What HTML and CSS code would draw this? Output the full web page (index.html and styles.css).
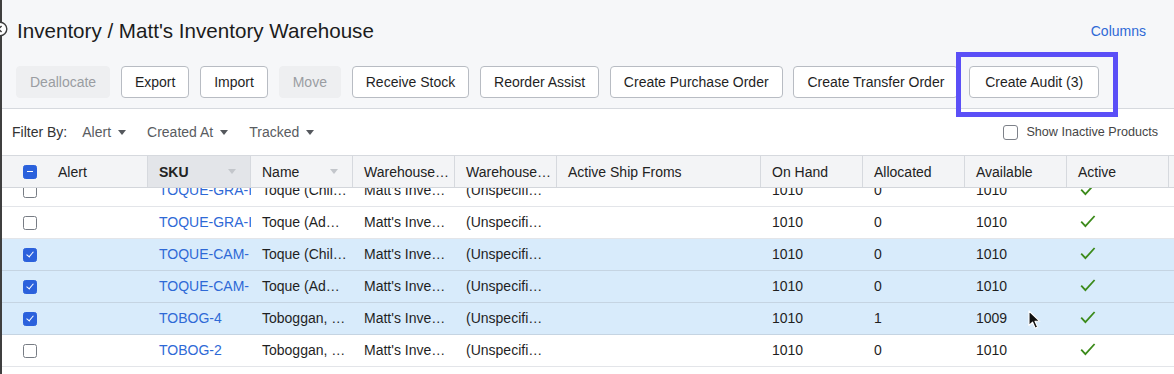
FILE: index.html
```html
<!DOCTYPE html>
<html lang="en">
<head>
    <meta charset="UTF-8">
    <title>Inventory - Matt's Inventory Warehouse</title>
    <link rel="stylesheet" href="styles.css">
</head>
<body>
<div class="page">
    <span class="collapse-handle">
        <svg width="16" height="16" viewBox="0 0 16 16"><circle cx="8" cy="8" r="6.8" fill="#fff" stroke="#3d3d3d" stroke-width="1.4"/><path d="M9.6 5 L6.6 8 L9.6 11" fill="none" stroke="#3d3d3d" stroke-width="1.4"/></svg>
    </span>

    <div class="top">
        <div class="title-row">
            <h1>Inventory / Matt's Inventory Warehouse</h1>
            <a class="columns-link" href="#">Columns</a>
        </div>
        <div class="actions">
            <button class="btn" disabled>Deallocate</button>
            <button class="btn">Export</button>
            <button class="btn">Import</button>
            <button class="btn" disabled>Move</button>
            <button class="btn">Receive Stock</button>
            <button class="btn">Reorder Assist</button>
            <button class="btn">Create Purchase Order</button>
            <button class="btn">Create Transfer Order</button>
            <span class="focus-wrap">
                <button class="btn wide">Create Audit (3)</button>
                <span class="focus-ring"></span>
            </span>
        </div>
    </div>

    <div class="filters">
        <span class="filter-label">Filter By:</span>
        <span class="filter">Alert <i class="caret"></i></span>
        <span class="filter">Created At <i class="caret"></i></span>
        <span class="filter">Tracked <i class="caret"></i></span>
        <label class="inactive"><span class="box"></span>Show Inactive Products</label>
    </div>

    <div class="grid">
        <div class="grid-head">
            <div class="cell first"><span class="check partial"></span><span>Alert</span></div>
            <div class="cell sorted"><b>SKU</b><i class="sort"></i></div>
            <div class="cell"><span>Name</span><i class="sort"></i></div>
            <div class="cell"><span>Warehouse…</span></div>
            <div class="cell"><span>Warehouse…</span></div>
            <div class="cell"><span>Active Ship Froms</span></div>
            <div class="cell"><span>On Hand</span></div>
            <div class="cell"><span>Allocated</span></div>
            <div class="cell"><span>Available</span></div>
            <div class="cell"><span>Active</span></div>
            <div class="cell end"></div>
        </div>
        <div class="grid-body">
            <div class="rows">
                <div class="row">
                    <div class="cell first"><span class="check"></span></div>
                    <div class="cell sku">TOQUE-GRA-I</div>
                    <div class="cell">Toque (Chil…</div>
                    <div class="cell">Matt's Inve…</div>
                    <div class="cell">(Unspecifi…</div>
                    <div class="cell"></div>
                    <div class="cell">1010</div>
                    <div class="cell">0</div>
                    <div class="cell">1010</div>
                    <div class="cell"><svg class="tick" width="16" height="13" viewBox="0 0 16 13"><path d="M1.2 6.6 L5.4 11.2 L14.6 1" fill="none" stroke="#3b8a1a" stroke-width="1.8"/></svg></div>
                    <div class="cell end"></div>
                </div>
                <div class="row">
                    <div class="cell first"><span class="check"></span></div>
                    <div class="cell sku">TOQUE-GRA-I</div>
                    <div class="cell">Toque (Ad…</div>
                    <div class="cell">Matt's Inve…</div>
                    <div class="cell">(Unspecifi…</div>
                    <div class="cell"></div>
                    <div class="cell">1010</div>
                    <div class="cell">0</div>
                    <div class="cell">1010</div>
                    <div class="cell"><svg class="tick" width="16" height="13" viewBox="0 0 16 13"><path d="M1.2 6.6 L5.4 11.2 L14.6 1" fill="none" stroke="#3b8a1a" stroke-width="1.8"/></svg></div>
                    <div class="cell end"></div>
                </div>
                <div class="row selected">
                    <div class="cell first"><span class="check on"></span></div>
                    <div class="cell sku">TOQUE-CAM-</div>
                    <div class="cell">Toque (Chil…</div>
                    <div class="cell">Matt's Inve…</div>
                    <div class="cell">(Unspecifi…</div>
                    <div class="cell"></div>
                    <div class="cell">1010</div>
                    <div class="cell">0</div>
                    <div class="cell">1010</div>
                    <div class="cell"><svg class="tick" width="16" height="13" viewBox="0 0 16 13"><path d="M1.2 6.6 L5.4 11.2 L14.6 1" fill="none" stroke="#3b8a1a" stroke-width="1.8"/></svg></div>
                    <div class="cell end"></div>
                </div>
                <div class="row selected">
                    <div class="cell first"><span class="check on"></span></div>
                    <div class="cell sku">TOQUE-CAM-</div>
                    <div class="cell">Toque (Ad…</div>
                    <div class="cell">Matt's Inve…</div>
                    <div class="cell">(Unspecifi…</div>
                    <div class="cell"></div>
                    <div class="cell">1010</div>
                    <div class="cell">0</div>
                    <div class="cell">1010</div>
                    <div class="cell"><svg class="tick" width="16" height="13" viewBox="0 0 16 13"><path d="M1.2 6.6 L5.4 11.2 L14.6 1" fill="none" stroke="#3b8a1a" stroke-width="1.8"/></svg></div>
                    <div class="cell end"></div>
                </div>
                <div class="row selected">
                    <div class="cell first"><span class="check on"></span></div>
                    <div class="cell sku">TOBOG-4</div>
                    <div class="cell">Toboggan, …</div>
                    <div class="cell">Matt's Inve…</div>
                    <div class="cell">(Unspecifi…</div>
                    <div class="cell"></div>
                    <div class="cell">1010</div>
                    <div class="cell">1</div>
                    <div class="cell">1009</div>
                    <div class="cell"><svg class="tick" width="16" height="13" viewBox="0 0 16 13"><path d="M1.2 6.6 L5.4 11.2 L14.6 1" fill="none" stroke="#3b8a1a" stroke-width="1.8"/></svg></div>
                    <div class="cell end"></div>
                </div>
                <div class="row">
                    <div class="cell first"><span class="check"></span></div>
                    <div class="cell sku">TOBOG-2</div>
                    <div class="cell">Toboggan, …</div>
                    <div class="cell">Matt's Inve…</div>
                    <div class="cell">(Unspecifi…</div>
                    <div class="cell"></div>
                    <div class="cell">1010</div>
                    <div class="cell">0</div>
                    <div class="cell">1010</div>
                    <div class="cell"><svg class="tick" width="16" height="13" viewBox="0 0 16 13"><path d="M1.2 6.6 L5.4 11.2 L14.6 1" fill="none" stroke="#3b8a1a" stroke-width="1.8"/></svg></div>
                    <div class="cell end"></div>
                </div>
            </div>
        </div>
    </div>

    <!-- mouse pointer caught in the screenshot -->
    <svg class="pointer" width="14" height="20" viewBox="0 0 14 20"><path d="M1 1 L1 15.5 L4.6 12.2 L7.2 18.2 L9.6 17.1 L7 11.3 L11.8 11.3 Z" fill="#111" stroke="#fff" stroke-width="1.1" stroke-linejoin="round"/></svg>
</div>
</body>
</html>
```

FILE: styles.css
```css
*{margin: 0;padding: 0;box-sizing: border-box;}
html,body{
    height: 100%;
    overflow: hidden;
}
body{
    font-family: "Liberation Sans", Arial, sans-serif;
    font-size: 14px;
    color: #1f1f1f;
    background-color: #fff;
}
.page{
    position: relative;
    height: 100vh;
    border-left: 2px solid #3f3f3f;
}
.collapse-handle{
    position: absolute;
    left: -10px;
    top: 21px;
    width: 16px;
    height: 16px;
}
.collapse-handle svg{display: block;}

/* top bar */
.top{
    background-color: #f6f7f9;
    border-bottom: 1px solid #d6d9de;
    padding: 18px 28px 10px 14px;
}
.title-row{
    display: flex;
    justify-content: space-between;
    align-items: center;
}
.title-row h1{
    font-size: 20.6px;
    font-weight: normal;
    line-height: 26px;
    color: #1c1c1c;
    padding-left: 1px;
}
.columns-link{
    color: #2e69d6;
    text-decoration: none;
    font-size: 14px;
}
.actions{
    display: flex;
    align-items: center;
    gap: 10.8px;
    margin-top: 22px;
}
.btn{
    height: 32px;
    padding: 0 13px;
    font-family: inherit;
    font-size: 14px;
    color: #1f1f1f;
    background-color: #fff;
    border: 1px solid #b8bcc3;
    border-radius: 4px;
}
.btn.wide{padding: 0 15px;}
.btn:disabled{
    color: #9a9da2;
    background-color: #eeeff1;
    border-color: #eeeff1;
}
.focus-wrap{
    position: relative;
    display: flex;
}
.focus-ring{
    position: absolute;
    top: -14px;
    left: -13px;
    right: -19px;
    bottom: -19px;
    border: 5px solid #5b4ff7;
}

/* filters */
.filters{
    display: flex;
    align-items: center;
    height: 46px;
    padding: 0 16px 0 10px;
}
.filter-label{
    color: #333;
    margin-right: 15px;
}
.filter{
    display: flex;
    align-items: center;
    gap: 7px;
    color: #595c61;
    margin-right: 21px;
}
.caret{
    width: 0;
    height: 0;
    border-left: 4.5px solid transparent;
    border-right: 4.5px solid transparent;
    border-top: 5px solid #55585d;
}
.inactive{
    display: flex;
    align-items: center;
    margin-left: auto;
    font-size: 12.6px;
    color: #454545;
}
.inactive .box{
    width: 15px;
    height: 15px;
    border: 1.5px solid #7d8189;
    border-radius: 3px;
    margin-right: 8px;
    background-color: #fff;
}

/* grid */
.grid{
    --cols: 146px 103px 102px 102px 102px 204px 102px 102px 102px 102px 1fr;
    border-top: 1px solid #d6d9de;
}
.grid-head,.row{
    display: grid;
    grid-template-columns: var(--cols);
}
.grid-head{
    height: 32px;
    border-bottom: 1px solid #d3d6db;
    background-color: #f3f4f6;
}
.grid-head .cell{
    display: flex;
    align-items: center;
    justify-content: space-between;
    padding: 0 14px 0 11px;
    border-right: 1px solid #d6d9de;
    color: #222;
    white-space: nowrap;
    overflow: hidden;
}
.grid-head .cell.sorted{background-color: #e3e5e9;}
.grid-head .cell b{font-weight: bold;}
.grid-head .cell.end{border-right: none;}
.grid-head .cell.first{
    justify-content: flex-start;
    padding-left: 21px;
    gap: 21px;
}
.sort{
    width: 0;
    height: 0;
    border-left: 4.5px solid transparent;
    border-right: 4.5px solid transparent;
    border-top: 5px solid #c3c6cb;
}

.grid-body{
    height: 187px;
    overflow: hidden;
}
.rows{margin-top: -13px;}
.row{
    height: 32px;
    border-bottom: 1px solid #e3e5e9;
}
.row.selected{
    background-color: #d8ebfb;
    border-bottom-color: #c5d4e2;
}
.row .cell{
    display: block;
    padding: 0 6px 0 11px;
    white-space: nowrap;
    overflow: hidden;
    line-height: 31px;
}
.row .cell.first{
    display: flex;
    align-items: center;
    padding-left: 21px;
}
.row .cell.sku{
    color: #2e69d6;
    padding-right: 0;
}
.tick{
    vertical-align: middle;
    margin-left: 2px;
    margin-top: -3px;
}

.check{
    display: inline-block;
    width: 14px;
    height: 14px;
    border: 1.5px solid #777c84;
    border-radius: 2.5px;
    background-color: #fff;
    position: relative;
}
.check.on,.check.partial{
    background-color: #2b61dc;
    border-color: #2b61dc;
}
.check.on::after{
    content: "";
    position: absolute;
    left: 3.5px;
    top: 1.5px;
    width: 3px;
    height: 6px;
    border: solid #fff;
    border-width: 0 1.4px 1.4px 0;
    transform: rotate(40deg);
}
.check.partial::after{
    content: "";
    position: absolute;
    left: 2.5px;
    top: 5.2px;
    width: 6px;
    height: 1.6px;
    background-color: #fff;
}

.pointer{
    position: absolute;
    left: 1026px;
    top: 310px;
}
```
